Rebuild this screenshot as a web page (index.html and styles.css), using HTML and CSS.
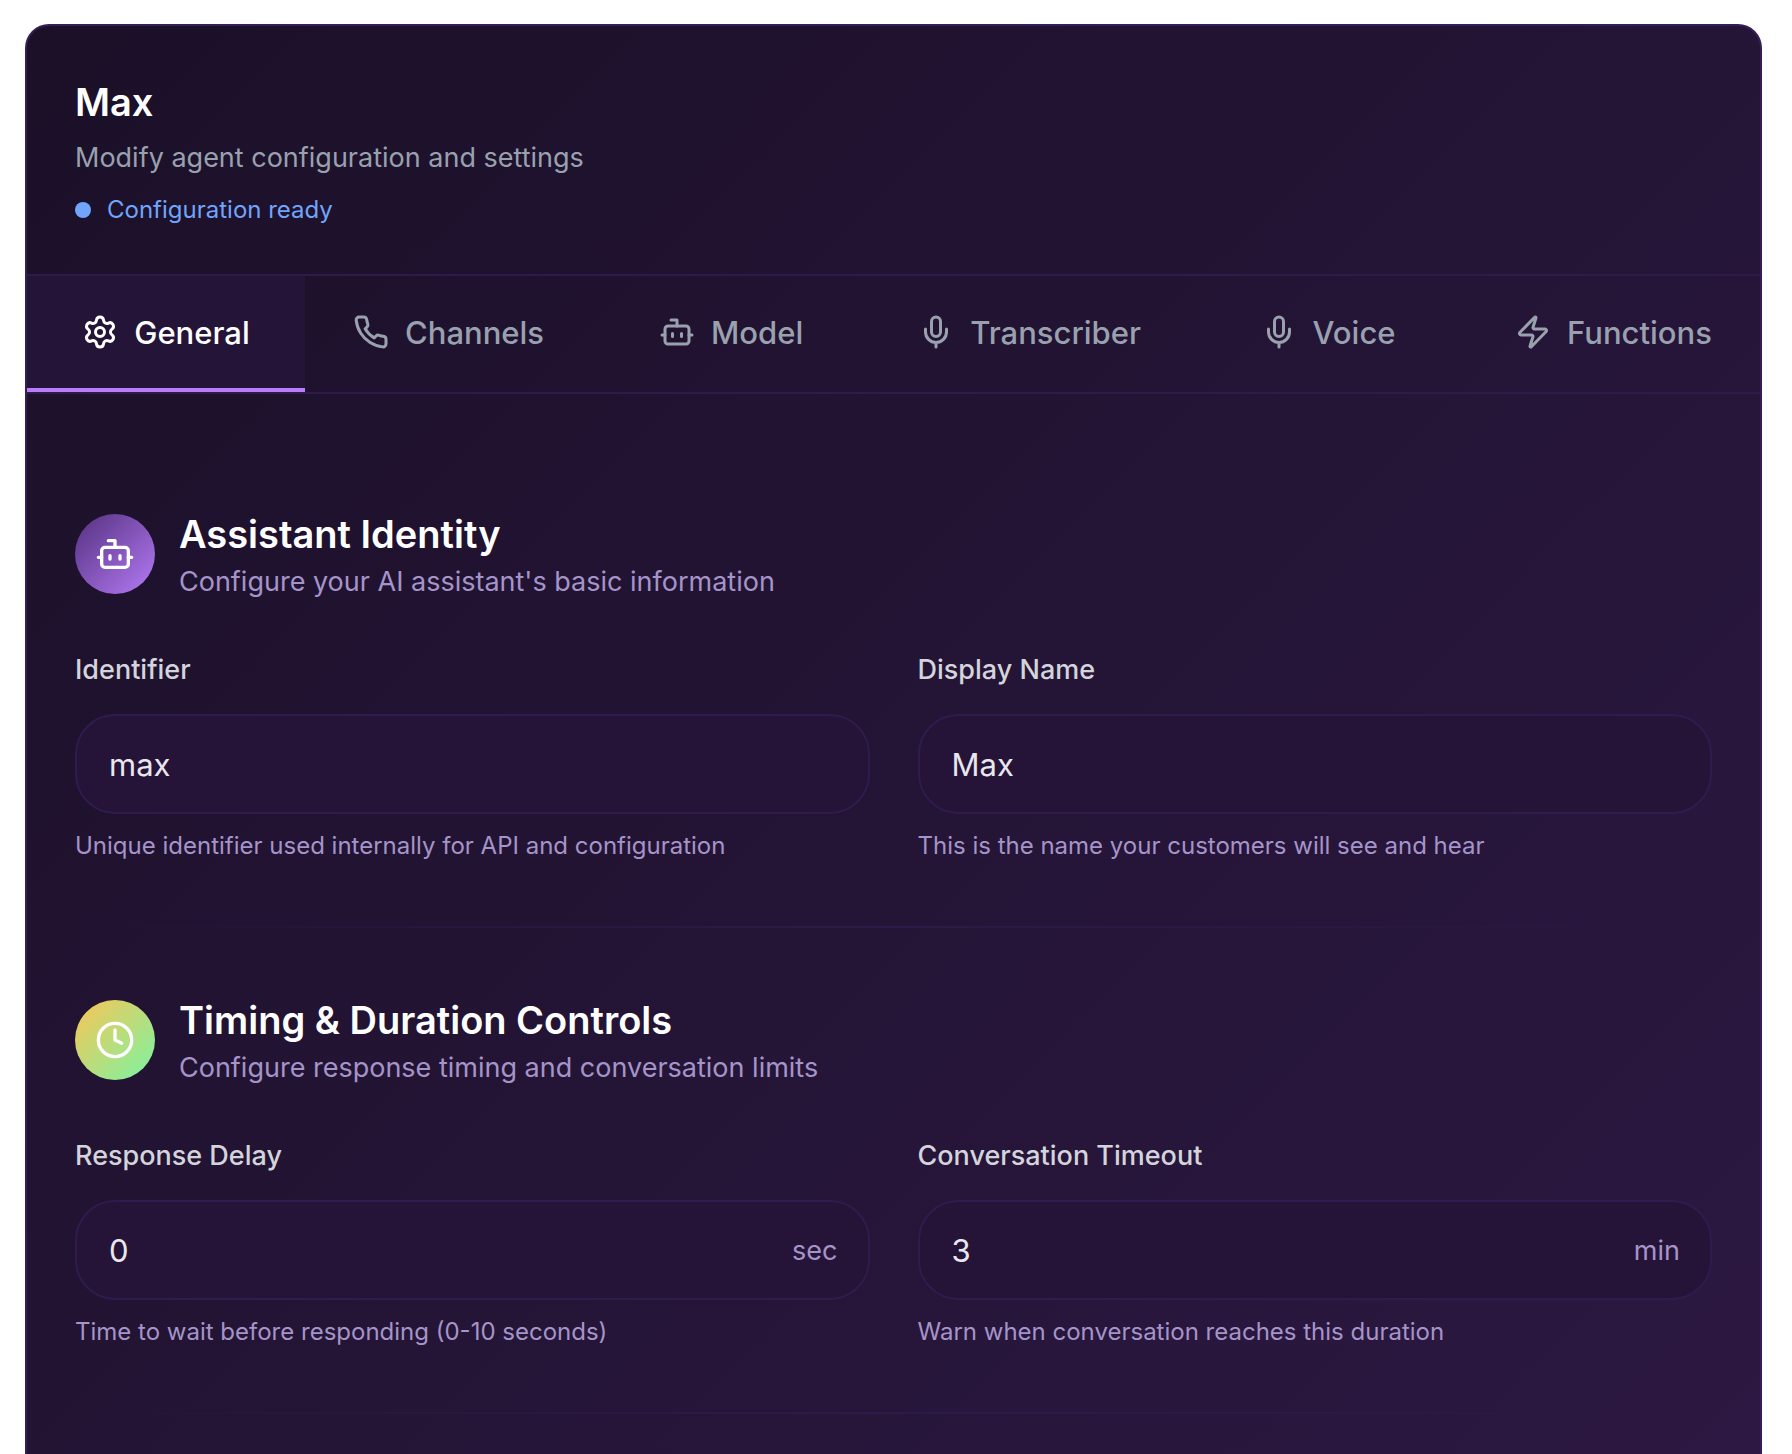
FILE: index.html
```html
<!DOCTYPE html>
<html lang="en">
	<head>
		<meta charset="UTF-8">
		<meta name="viewport" content="width=device-width, initial-scale=1">
		<title>Max</title>
		<link rel="stylesheet" href="styles.css">
	</head>
	<body>
		<!-- shared icons -->
		<svg class="sprite" aria-hidden="true">
			<symbol id="icon-bot" viewBox="0 0 24 24">
				<path d="M12 8V4H8"/>
				<rect width="16" height="12" x="4" y="8" rx="2"/>
				<path d="M2 14h2M20 14h2M15 13v2M9 13v2"/>
			</symbol>
			<symbol id="icon-mic" viewBox="0 0 24 24">
				<path d="M12 2a3 3 0 0 0-3 3v7a3 3 0 0 0 6 0V5a3 3 0 0 0-3-3Z"/>
				<path d="M19 10v2a7 7 0 0 1-14 0v-2M12 19v3"/>
			</symbol>
		</svg>
		<main class="panel">
			<header class="panel_header">
				<h1>Max</h1>
				<p class="subtitle">Modify agent configuration and settings</p>
				<p class="status"><span class="status_dot"></span>Configuration ready</p>
			</header>
			<nav class="tabs">
				<button type="button" class="tab active">
					<svg class="icon" viewBox="0 0 24 24"><path d="M9.671 4.136a2.34 2.34 0 0 1 4.659 0 2.34 2.34 0 0 0 3.319 1.915 2.34 2.34 0 0 1 2.33 4.033 2.34 2.34 0 0 0 0 3.831 2.34 2.34 0 0 1-2.33 4.033 2.34 2.34 0 0 0-3.319 1.915 2.34 2.34 0 0 1-4.659 0 2.34 2.34 0 0 0-3.32-1.915 2.34 2.34 0 0 1-2.33-4.033 2.34 2.34 0 0 0 0-3.831A2.34 2.34 0 0 1 6.35 6.051a2.34 2.34 0 0 0 3.319-1.915"/><circle cx="12" cy="12" r="3"/></svg>
					General
				</button>
				<button type="button" class="tab">
					<svg class="icon" viewBox="0 0 24 24"><path d="M22 16.92v3a2 2 0 0 1-2.18 2 19.79 19.79 0 0 1-8.63-3.07 19.5 19.5 0 0 1-6-6 19.79 19.79 0 0 1-3.07-8.67A2 2 0 0 1 4.11 2h3a2 2 0 0 1 2 1.72 12.84 12.84 0 0 0 .7 2.81 2 2 0 0 1-.45 2.11L8.09 9.91a16 16 0 0 0 6 6l1.27-1.27a2 2 0 0 1 2.11-.45 12.84 12.84 0 0 0 2.81.7A2 2 0 0 1 22 16.92z"/></svg>
					Channels
				</button>
				<button type="button" class="tab">
					<svg class="icon"><use href="#icon-bot"/></svg>
					Model
				</button>
				<button type="button" class="tab">
					<svg class="icon"><use href="#icon-mic"/></svg>
					Transcriber
				</button>
				<button type="button" class="tab">
					<svg class="icon"><use href="#icon-mic"/></svg>
					Voice
				</button>
				<button type="button" class="tab">
					<svg class="icon" viewBox="0 0 24 24"><path d="M4 14a1 1 0 0 1-.78-1.63l9.9-10.2a.5.5 0 0 1 .86.46l-1.92 6.02A1 1 0 0 0 13 10h7a1 1 0 0 1 .78 1.63l-9.9 10.2a.5.5 0 0 1-.86-.46l1.92-6.02A1 1 0 0 0 11 14z"/></svg>
					Functions
				</button>
			</nav>
			<div class="panel_body">
				<section class="section">
					<div class="section_head">
						<span class="badge badge_purple"><svg class="icon"><use href="#icon-bot"/></svg></span>
						<div>
							<h2>Assistant Identity</h2>
							<p>Configure your AI assistant's basic information</p>
						</div>
					</div>
					<div class="fields">
						<div class="field">
							<label for="identifier">Identifier</label>
							<div class="input_box"><input type="text" id="identifier" value="max"></div>
							<p class="hint">Unique identifier used internally for API and configuration</p>
						</div>
						<div class="field">
							<label for="display_name">Display Name</label>
							<div class="input_box"><input type="text" id="display_name" value="Max"></div>
							<p class="hint">This is the name your customers will see and hear</p>
						</div>
					</div>
				</section>
				<hr class="divider">
				<section class="section">
					<div class="section_head">
						<span class="badge badge_green"><svg class="icon" viewBox="0 0 24 24"><circle cx="12" cy="12" r="10"/><path d="M12 6v6l4 2"/></svg></span>
						<div>
							<h2>Timing &amp; Duration Controls</h2>
							<p>Configure response timing and conversation limits</p>
						</div>
					</div>
					<div class="fields">
						<div class="field">
							<label for="delay">Response Delay</label>
							<div class="input_box"><input type="number" id="delay" min="0" max="10" value="0"><span class="unit">sec</span></div>
							<p class="hint">Time to wait before responding (0-10 seconds)</p>
						</div>
						<div class="field">
							<label for="timeout">Conversation Timeout</label>
							<div class="input_box"><input type="number" id="timeout" value="3"><span class="unit">min</span></div>
							<p class="hint">Warn when conversation reaches this duration</p>
						</div>
					</div>
				</section>
				<hr class="divider">
			</div>
		</main>
	</body>
</html>
```
FILE: styles.css
```css
*{
	box-sizing: border-box;
	margin: 0;
	padding: 0;
}
body{
	background-color: #fff;
	font-family: Inter, "Liberation Sans", sans-serif;
	padding: 24px 30px 0 25px;
}
.sprite{
	display: none;
}
.icon{
	width: 36px;
	height: 36px;
	flex: none;
	fill: none;
	stroke: currentColor;
	stroke-width: 2;
	stroke-linecap: round;
	stroke-linejoin: round;
}
.panel{
	border: 2px solid #351e56;
	border-bottom: none;
	border-radius: 24px 24px 0 0;
	background: linear-gradient(135deg, #1b1028, #2c1842);
	overflow: hidden;
}
.panel_header{
	padding: 48px;
	border-bottom: 2px solid #2e1a4b;
}
h1{
	font-size: 38px;
	font-weight: 600;
	line-height: 56px;
	color: #fff;
}
.subtitle{
	margin-top: 8px;
	font-size: 27px;
	line-height: 40px;
	color: #99a1af;
}
.status{
	display: flex;
	align-items: center;
	gap: 16px;
	margin-top: 16px;
	font-size: 24px;
	line-height: 32px;
	color: #71a5fb;
}
.status_dot{
	width: 16px;
	height: 16px;
	border-radius: 50%;
	background-color: #71a5fb;
}
/* tabs */
.tabs{
	display: flex;
	border-bottom: 2px solid #2e1a4b;
	overflow: hidden;
}
.tab{
	display: flex;
	align-items: center;
	justify-content: center;
	gap: 16px;
	flex: 1 0 auto;
	min-width: 278px;
	height: 116px;
	padding: 0 48px;
	border: none;
	border-bottom: 4px solid transparent;
	background: none;
	font-family: inherit;
	font-size: 31px;
	font-weight: 500;
	color: #99a1af;
	cursor: pointer;
}
.tab.active{
	border-bottom-color: #b87dfb;
	background-color: #241437;
	color: #fff;
}
/* form */
.panel_body{
	padding: 48px 48px 40px;
}
.section{
	padding: 64px 0;
}
.section_head{
	display: flex;
	align-items: center;
	gap: 24px;
	margin-bottom: 48px;
}
.section_head h2{
	font-size: 38px;
	font-weight: 600;
	line-height: 56px;
	color: #fff;
}
.section_head p{
	font-size: 27px;
	line-height: 40px;
	color: #a594c9;
}
.badge{
	display: flex;
	align-items: center;
	justify-content: center;
	width: 80px;
	height: 80px;
	border-radius: 50%;
	color: #fff;
}
.badge .icon{
	width: 40px;
	height: 40px;
}
.badge_purple{
	background: linear-gradient(135deg, #54307f, #b57bf5);
}
.badge_green{
	background: linear-gradient(135deg, #fbc455, #7af5a2);
}
.fields{
	display: grid;
	grid-template-columns: 1fr 1fr;
	gap: 48px;
}
.field label{
	display: block;
	margin-bottom: 24px;
	font-size: 27px;
	font-weight: 500;
	line-height: 40px;
	color: #d4d4dc;
}
.input_box{
	display: flex;
	align-items: center;
	height: 100px;
	padding: 0 30px 0 32px;
	border: 2px solid #301b4e;
	border-radius: 40px;
	background-color: #251438;
}
.input_box input{
	flex: 1;
	min-width: 0;
	border: none;
	outline: none;
	background: none;
	font-family: inherit;
	font-size: 31px;
	color: #e9e7ee;
	-moz-appearance: textfield;
	appearance: textfield;
}
.unit{
	font-size: 27px;
	color: #a594c9;
}
.hint{
	margin-top: 16px;
	font-size: 24px;
	line-height: 32px;
	color: #a594c9;
}
.divider{
	height: 2px;
	border: none;
	background: linear-gradient(90deg, transparent, #2d1a4a, transparent);
}
```
